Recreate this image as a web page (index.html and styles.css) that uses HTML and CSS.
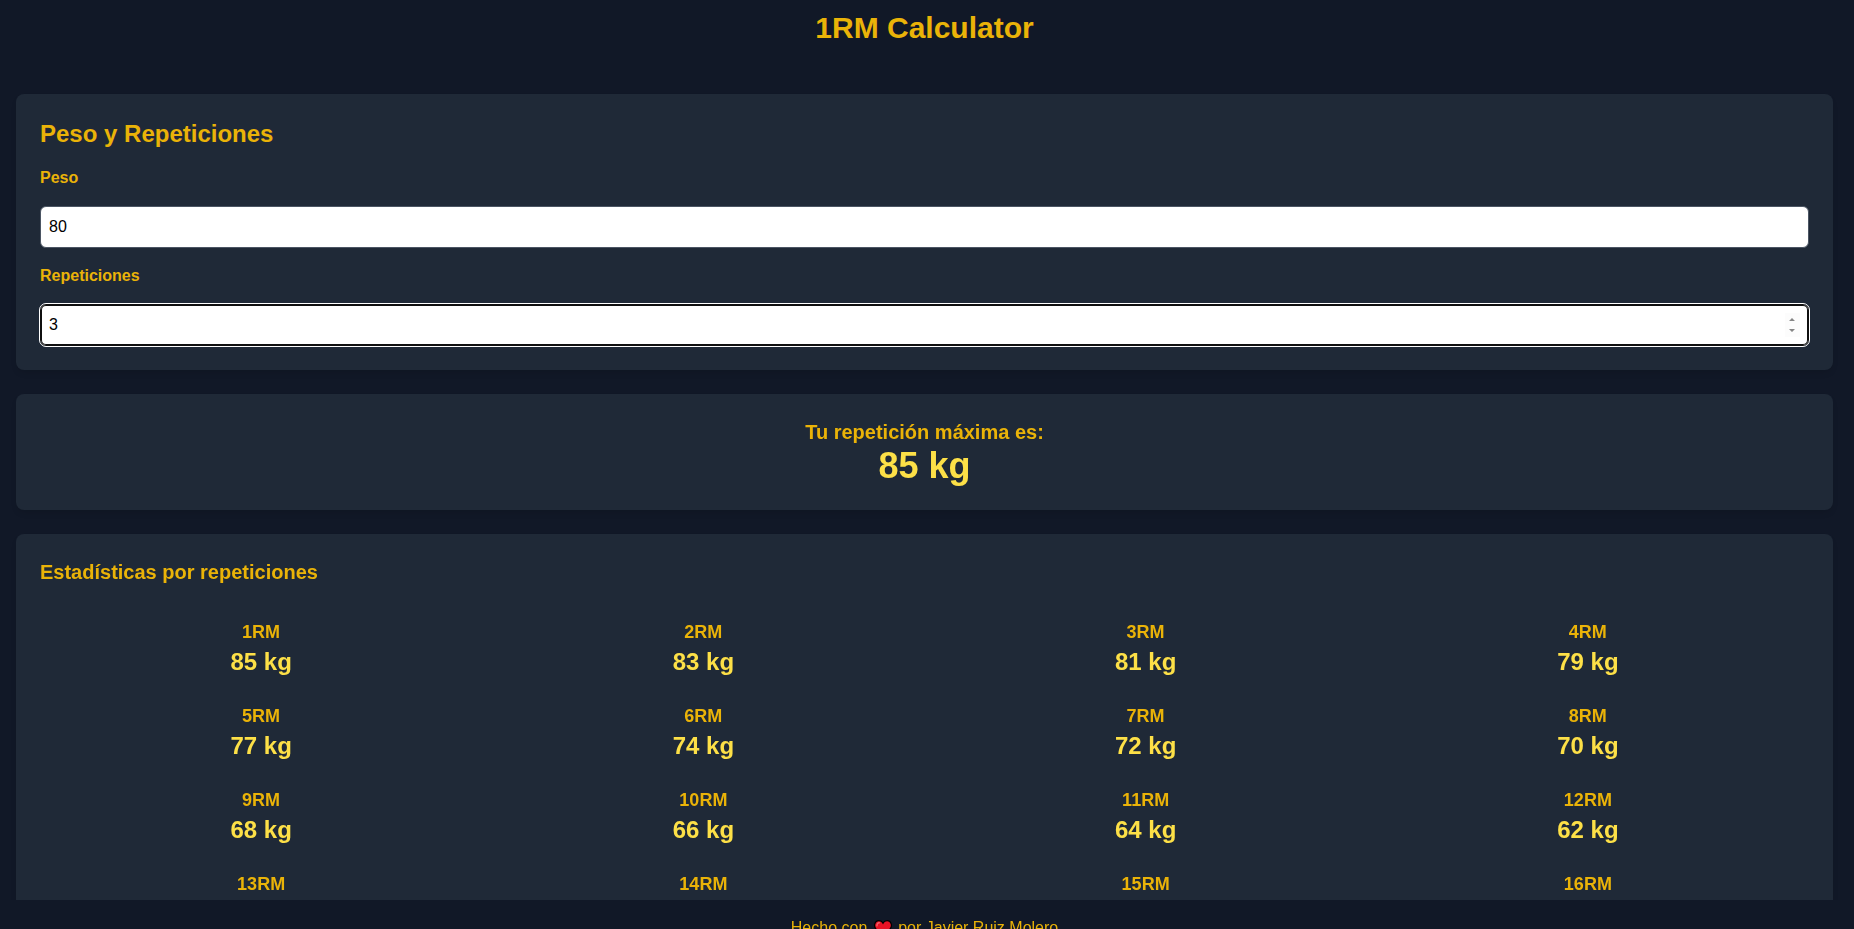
FILE: index.html
```html
<!doctype html>
<html lang="es">
  <head>
    <meta charset="utf-8" />
    <title>1RM Calculator</title>
    <link rel="stylesheet" href="styles.css">
  </head>
  <body>
    <div class="app">
      <header class="header">
        <h1>1RM Calculator</h1>
      </header>
      <main class="content">
        <form class="card">
          <h2>Peso y Repeticiones</h2>
          <label for="weight">Peso</label>
          <input type="number" id="weight" name="weight" value="80" min="0">
          <label for="reps">Repeticiones</label>
          <input type="number" id="reps" name="reps" value="3" min="1" autofocus>
        </form>
        <section class="card result">
          <h3>Tu repetición máxima es:</h3>
          <p class="result-value">85 kg</p>
        </section>
        <section class="card stats">
          <h3>Estadísticas por repeticiones</h3>
          <div class="stats-grid">
            <div class="stat"><h4>1RM</h4><p>85 kg</p></div>
            <div class="stat"><h4>2RM</h4><p>83 kg</p></div>
            <div class="stat"><h4>3RM</h4><p>81 kg</p></div>
            <div class="stat"><h4>4RM</h4><p>79 kg</p></div>
            <div class="stat"><h4>5RM</h4><p>77 kg</p></div>
            <div class="stat"><h4>6RM</h4><p>74 kg</p></div>
            <div class="stat"><h4>7RM</h4><p>72 kg</p></div>
            <div class="stat"><h4>8RM</h4><p>70 kg</p></div>
            <div class="stat"><h4>9RM</h4><p>68 kg</p></div>
            <div class="stat"><h4>10RM</h4><p>66 kg</p></div>
            <div class="stat"><h4>11RM</h4><p>64 kg</p></div>
            <div class="stat"><h4>12RM</h4><p>62 kg</p></div>
            <div class="stat"><h4>13RM</h4></div>
            <div class="stat"><h4>14RM</h4></div>
            <div class="stat"><h4>15RM</h4></div>
            <div class="stat"><h4>16RM</h4></div>
          </div>
        </section>
      </main>
      <footer class="footer">
        Hecho con
        <svg class="heart" viewBox="0 0 18 18" aria-hidden="true">
          <path d="M9 16.500 1.900 9C-.8 5.500 1 .7 4.900.7 6.800.7 8.200 1.700 9 3.200 9.800 1.700 11.200.7 13.100.7c3.900 0 5.700 4.800 3 8.300z" fill="#e81224" stroke="#000" stroke-width="1.200"/>
          <path d="M3 5.800C2.800 4 3.800 2.900 5.300 2.800" fill="none" stroke="#f4606c" stroke-width="1.400" stroke-linecap="round"/>
        </svg>
        por Javier Ruiz Molero
      </footer>
    </div>
  </body>
</html>
```
FILE: styles.css
```css
*
{
    box-sizing: border-box;
}

body
{
    margin: 0;
    overflow: hidden;
    background: #111827;
    color: #eab308;
    font-family: "Liberation Sans", Arial, sans-serif;
    font-size: 16px;
    line-height: 24px;
}

h1, h2, h3, h4, p
{
    margin: 0;
}

/* a little taller than the window, the footer ends below the fold */
.app
{
    display: flex;
    flex-direction: column;
    height: calc(100vh + 27px);
    padding-right: 5px;
}

.header
{
    padding: 10px 16px 32px;
    text-align: center;
}

h1
{
    font-size: 30px;
    line-height: 36px;
}

.content
{
    display: flex;
    flex: 1;
    flex-direction: column;
    gap: 24px;
    min-height: 0;
    padding: 16px 16px 0;
    overflow: hidden;
}

.card
{
    flex-shrink: 0;
    padding: 24px;
    border-radius: 8px;
    background: #1f2937;
    box-shadow: 0 4px 6px -1px rgba(0, 0, 0, 0.1);
}

h2
{
    margin-bottom: 16px;
    font-size: 24px;
    line-height: 32px;
}

h3
{
    font-size: 20px;
    line-height: 28px;
}

label
{
    display: block;
    margin-bottom: 16px;
    font-weight: bold;
}

input
{
    display: block;
    width: 100%;
    height: 42px;
    padding: 8px;
    border: 1px solid #4b5563;
    border-radius: 6px;
    background: #fff;
    color: #000;
    font: inherit;
}

input + label
{
    margin-top: 16px;
}

input:focus
{
    border-color: #101010;
    outline: 1px solid #fff;
    box-shadow: inset 0 0 0 1px #101010;
}

input::-webkit-inner-spin-button
{
    width: 15px;
    height: 24px;
    -webkit-appearance: none;
    background: #fcfcfc url("data:image/svg+xml,%3Csvg xmlns='http://www.w3.org/2000/svg' width='15' height='24'%3E%3Cpath d='M4 8 7 5 10 8zM4 16 7 19 10 16z' fill='%23858585'/%3E%3C/svg%3E") no-repeat;
    opacity: 0;
}

input:focus::-webkit-inner-spin-button
{
    opacity: 1;
}

.result
{
    text-align: center;
}

.result-value
{
    color: #fde047;
    font-size: 36px;
    font-weight: bold;
    line-height: 40px;
}

.stats h3
{
    margin-bottom: 20px;
}

.stats-grid
{
    display: grid;
    grid-template-columns: repeat(4, 1fr);
}

.stat
{
    padding: 12px;
    text-align: center;
}

.stat h4
{
    font-size: 18px;
    line-height: 28px;
}

.stat p
{
    color: #fde047;
    font-size: 24px;
    font-weight: bold;
    line-height: 32px;
}

.footer
{
    padding: 16px;
    text-align: center;
}

.heart
{
    width: 18px;
    height: 18px;
    margin: 0 2px;
    vertical-align: middle;
}
```
